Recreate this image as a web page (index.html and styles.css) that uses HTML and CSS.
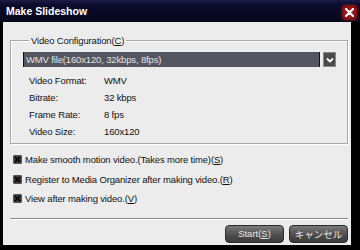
FILE: index.html
```html
<!DOCTYPE html>
<html lang="ja">
  <head>
    <meta charset="UTF-8" />
    <title>Make Slideshow</title>
    <link rel="stylesheet" href="styles.css">
  </head>
  <body>
    <div class="window">
      <div class="titlebar">
        <span class="title">Make Slideshow</span>
        <span class="close">
          <svg width="9" height="9" viewBox="0 0 9 9"><path d="M1 1L8 8M8 1L1 8" stroke="#fff" stroke-width="2.2" stroke-linecap="round"/></svg>
        </span>
      </div>
      <div class="content">
        <fieldset class="group">
          <legend>Video Configuration(<u>C</u>)</legend>
          <div class="combo">
            <div class="combo-value">WMV file(160x120, 32kbps, 8fps)</div>
            <div class="combo-btn">
              <svg width="8" height="6" viewBox="0 0 8 6"><path d="M1 1.5L4 4.5L7 1.5" fill="none" stroke="#fff" stroke-width="1.8"/></svg>
            </div>
          </div>
          <div class="info">
            <span>Video Format:</span><span>WMV</span>
            <span>Bitrate:</span><span>32 kbps</span>
            <span>Frame Rate:</span><span>8 fps</span>
            <span>Video Size:</span><span>160x120</span>
          </div>
        </fieldset>

        <div class="options">
          <label class="check">
            <span class="box"><svg width="9" height="9" viewBox="0 0 9 9"><path d="M2 2L7 7M7 2L2 7" stroke="#050505" stroke-width="1.6"/></svg></span>
            <span>Make smooth motion video.(Takes more time)(<u>S</u>)</span>
          </label>
          <label class="check">
            <span class="box"><svg width="9" height="9" viewBox="0 0 9 9"><path d="M2 2L7 7M7 2L2 7" stroke="#050505" stroke-width="1.6"/></svg></span>
            <span>Register to Media Organizer after making video.(<u>R</u>)</span>
          </label>
          <label class="check">
            <span class="box"><svg width="9" height="9" viewBox="0 0 9 9"><path d="M2 2L7 7M7 2L2 7" stroke="#050505" stroke-width="1.6"/></svg></span>
            <span>View after making video.(<u>V</u>)</span>
          </label>
        </div>

        <div class="footer">
          <button class="btn">Start(<u>S</u>)</button>
          <button class="btn">キャンセル</button>
        </div>
      </div>
    </div>
  </body>
</html>
```

FILE: styles.css
```css
body {
  margin: 0;
  background: #000;
  font-family: "Liberation Sans", "Noto Sans CJK JP", sans-serif;
  font-size: 9.5px;
  letter-spacing: -0.15px;
  color: #111;
}
.window {
  width: 360px;
  height: 250px;
  background: #000;
  display: flex;
  flex-direction: column;
}
.titlebar {
  height: 22px;
  display: flex;
  align-items: center;
  justify-content: space-between;
  padding: 0 3px 0 6px;
  background: linear-gradient(#1d1d48 0%, #0c0c2c 20%, #07071c 100%);
}
.title {
  color: #fff;
  font-weight: bold;
  font-size: 10.5px;
  letter-spacing: 0;
}
.close {
  width: 15px;
  height: 15px;
  margin-top: 2px;
  border-radius: 3px;
  background: radial-gradient(#b02020, #6a0808);
  box-shadow: 0 0 2px #a03030;
  display: flex;
  align-items: center;
  justify-content: center;
}
.content {
  margin: 0 9px 5px 3px;
  flex: 1;
  background: #ececec;
  padding: 13px 3px 0 7px;
  display: flex;
  flex-direction: column;
}
.group {
  margin: 0;
  padding: 6px 11px 3px 12px;
  border: 1px solid #a8a8a8;
  box-shadow: inset 1px 1px 0 #fff, 1px 1px 0 #fff;
}
.group legend {
  padding: 0 2px;
  margin-left: 6px;
}
.combo {
  display: flex;
  height: 15px;
}
.combo-value {
  flex: 1;
  background: #55555f;
  border-left: 1px solid #111;
  border-right: 1px solid #111;
  color: #e4e4e4;
  line-height: 15px;
  padding-left: 2px;
}
.combo-btn {
  width: 13px;
  margin-left: 3px;
  background: #4a4a4a;
  border: 1px solid #888;
  box-sizing: border-box;
  display: flex;
  align-items: center;
  justify-content: center;
}
.info {
  display: grid;
  grid-template-columns: 75px auto;
  grid-auto-rows: 17px;
  align-items: center;
  padding: 5px 0 0 6px;
}
.options {
  display: flex;
  flex-direction: column;
  padding-top: 6px;
}
.check {
  display: flex;
  align-items: center;
  gap: 3px;
  height: 19.5px;
  margin-left: 3px;
}
.box {
  width: 9px;
  height: 9px;
  border-radius: 2px;
  background: #3a3a3a;
  box-shadow: inset 0 0 0 1px #555;
  display: flex;
}
.footer {
  margin-top: 9px;
  border-top: 1px solid #8a8a8a;
  box-shadow: inset 0 1px 0 #fff;
  display: flex;
  justify-content: flex-end;
  gap: 5px;
  padding-top: 6px;
}
.btn {
  width: 59px;
  height: 18px;
  padding: 0;
  border: 1px solid #2a2a2a;
  border-radius: 4px;
  background: linear-gradient(#7a7a7a, #4e4e4e 55%, #3c3c3c);
  color: #e8e8e8;
  font-family: inherit;
  font-size: 9.5px;
}
```
